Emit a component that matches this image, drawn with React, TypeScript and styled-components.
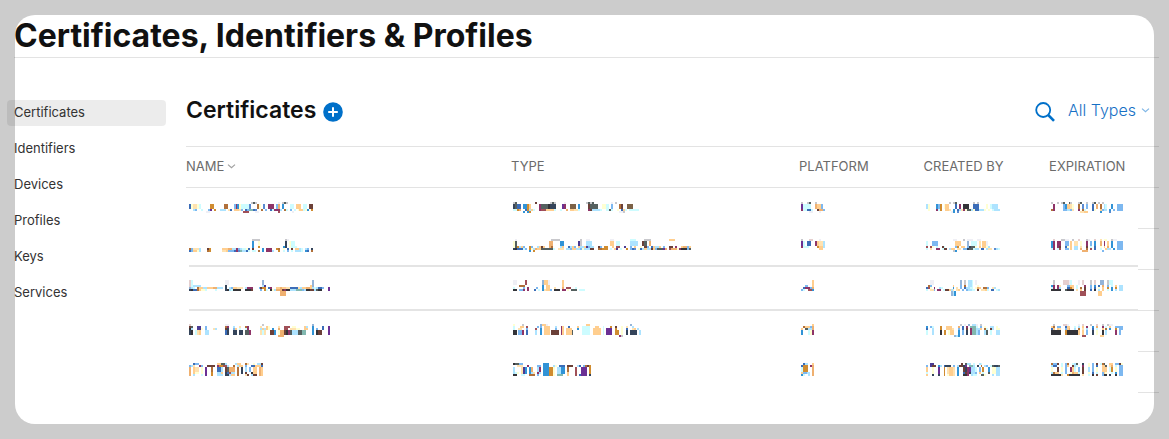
import React from "react";
import styled, { createGlobalStyle } from "styled-components";

const GlobalStyle = createGlobalStyle`
  *, *::before, *::after { box-sizing: border-box; }
  body {
    margin: 0;
    background: #fff;
    color: #111;
    font-family: Inter, "Liberation Sans", sans-serif;
  }
`;

const Page = styled.div`
  min-height: 100vh;
  padding: 15px 10px 46px 7px;
`;

/* Translucent frame that shades everything outside the rounded window. */
const Frame = styled.div`
  position: fixed;
  inset: 15px;
  border-radius: 20px;
  box-shadow: 0 0 0 40px rgba(0, 0, 0, 0.2);
  pointer-events: none;
`;

const Header = styled.header`
  margin-left: 7px;
  border-bottom: 1px solid #e3e3e3;
`;

const PageTitle = styled.h1`
  margin: 0;
  font-size: 32px;
  line-height: 42px;
  font-weight: 700;
`;

const Columns = styled.div`
  display: flex;
  gap: 20px;
  padding-top: 42px;
`;

const Sidebar = styled.nav`
  display: flex;
  flex-direction: column;
  flex: 0 0 159px;
  gap: 10px;
`;

const SideLink = styled.a<{ $active?: boolean }>`
  padding: 0 7px 2px;
  border-radius: 4px;
  background: ${(p) => (p.$active ? "rgba(0, 0, 0, 0.075)" : "transparent")};
  color: #333;
  font-size: 13px;
  line-height: 24px;
  text-decoration: none;
`;

const Main = styled.main`
  flex: 1;
  min-width: 0;
`;

const Toolbar = styled.div`
  display: flex;
  align-items: center;
  height: 46px;
  padding: 0 9px 26px 0;
`;

const SectionTitle = styled.h2`
  margin: 0;
  font-size: 23px;
  line-height: 22px;
  font-weight: 600;
`;

const IconButton = styled.button`
  display: flex;
  padding: 0;
  border: 0;
  background: none;
  color: #0070c9;
  cursor: pointer;
`;

const AddButton = styled(IconButton)`
  margin: 4px auto 0 7px;
`;

const SearchButton = styled(IconButton)`
  margin: 4px 13px 0 0;
`;

const Picker = styled.label`
  display: flex;
  align-items: center;
  gap: 5px;
  color: #1670c5;
`;

const PickerSelect = styled.select`
  appearance: none;
  field-sizing: content;
  padding: 0;
  border: 0;
  background: none;
  color: inherit;
  font-family: inherit;
  font-size: 16px;
  font-weight: 300;
  line-height: 20px;
`;

const Table = styled.table`
  width: 100%;
  border-collapse: separate;
  border-spacing: 0;
  table-layout: fixed;
`;

const HeadCell = styled.th`
  height: 42px;
  padding: 0 0 2px;
  border: solid #e3e3e3;
  border-width: 1px 0;
  color: #6b6b6b;
  font-size: 13px;
  font-weight: 400;
  line-height: 16px;
  text-align: left;
`;

const SortButton = styled.button`
  display: flex;
  align-items: center;
  gap: 3px;
  padding: 0;
  border: 0;
  background: none;
  color: inherit;
  font: inherit;
`;

const Row = styled.tr<{ $height: number; $top: number; $ruled?: boolean }>`
  height: ${(p) => p.$height}px;
  & > td {
    padding: ${(p) => p.$top}px 0 0 2px;
    border-bottom: ${(p) => (p.$ruled ? "2px solid #e4e4e4" : "0")};
    vertical-align: top;
  }
  & > td:first-child {
    padding-left: 3px;
    border-bottom: 0;
    background: ${(p) =>
      p.$ruled ? "linear-gradient(#e4e4e4, #e4e4e4) 3px 100% / 100% 2px no-repeat" : "none"};
  }
  & > td[rowspan] {
    padding: 0;
    border: 0;
  }
`;

const Tick = styled.div`
  height: 41px;
  border-bottom: 1px solid #e3e3e3;
`;

const Mosaic = styled.svg`
  display: block;
`;

const palette: Record<string, string> = {
  a: "#ade3ff", b: "#7db8f0", c: "#cdfcff", d: "#333338", e: "#efeff5",
  f: "#ffe2b0", g: "#55605f", h: "#7c6247", i: "#4b3b93", j: "#3b6db8",
  k: "#34445a", l: "#ffffd2", m: "#8e3468", n: "#b0703a", o: "#ffce8f",
  p: "#6b3094", q: "#efb070", r: "#a05058", s: "#3193d6", t: "#d08c30",
  u: "#5b8bd0", v: "#c8c8cc", w: "#e5cfcf", x: "#6b4038", y: "#82b8b0",
  z: "#94b4d8",
};

/* Obscured cell text: bands of narrow colour cells spread over the text's width. */
function Obscured({ width, heights, bands }: { width: number; heights: number[]; bands: string[] }) {
  const columns = Math.max(...bands.map((b) => b.length));
  const total = heights.reduce((a, b) => a + b, 0);
  const edge = (x: number) => Math.round((x * width) / columns);
  let y = 0;
  return (
    <Mosaic width={width} height={total} shapeRendering="crispEdges" aria-hidden="true">
      {bands.map((band, i) => {
        const top = y;
        y += heights[i];
        return [...band].map((ch, x) =>
          palette[ch] ? (
            <rect
              key={`${i}-${x}`}
              x={edge(x)}
              y={top}
              width={edge(x + 1) - edge(x)}
              height={heights[i]}
              fill={palette[ch]}
            />
          ) : null
        );
      })}
    </Mosaic>
  );
}

type RowData = {
  height: number;
  top: number;
  ruled?: boolean;
  heights: number[];
  widths: number[];
  cells: string[][];
};

const rows: RowData[] = [
  {
    height: 41,
    top: 14,
    heights: [2, 5, 2, 2],
    widths: [124, 126, 24, 74, 72],
    cells: [
      [
        "                                vgv           e vgv   ",
        "jlfflc     tt     nn   bmslccccu   nl u  mmm bq s   cc ooo cc xx",
        "  ab  c   bp t  aaa fj ooofb jbyyju  n b  jcmmma nc b c loocls t",
        "         ee                 rrr   ee          r      e",
      ],
      [
        "vg         x      vgv    e          vgvg        e v",
        "kgjj ssto    mgggdkkk   pm  hhh s    xgggg  llc b   nx  hhh",
        "cctq  jtaoc  mrrooooc  c  q ooffc    mxaaaac  cgc  l joc ccccc",
        "     s st                                           eev",
      ],
      ["v  vg  v", "pcccc  qoob", "mccjjc  xqqb", "    ee   e"],
      [
        "            v vg        v v",
        "al   sbt loo   j m ddd  jjj    l caaa",
        " l   mct  oof s jafmlggaljjaaal l caaa",
        "             es u",
      ],
      [
        "v  v vg  gv   vg  v  vg v v",
        " m    bsoofl  n u b  j q n ac  s  bbb",
        "nm    bbaabf  m nc   jl  obaa s b bbb",
        "               ffoo      s    u",
      ],
    ],
  },
  {
    height: 38,
    top: 10,
    ruled: true,
    heights: [2, 5, 2, 2, 2],
    widths: [124, 178, 24, 74, 72],
    cells: [
      [
        "                                vvvv             ve",
        "                                s  l             k lcc",
        "                                s  t            sk lccc",
        "nbfffa   xt      oooqqaambacclj x    s mmm  tn  l j x ooac ab k",
        "jboola   nt      ffobbbjmuyaajc cc n s mmma  t  c b c aaac sj n",
      ],
      [
        " e                 vvvv          v  ee          ee        ccc    vvv         ooo",
        "lg                qq   ss       iv  aaa         oo cc     aaaa  xg q",
        "lgtaob  tb  aoxo  qn   ao  jaob oaaoibaa  xb tt  o rr  i  b o  l xb joaao b  xx m  oqqbo",
        "kdjjjcb tlaqooggggggc fff aabooaablaaaxx  nnttt c oi c  t bju ljaoaaxobgggpq rqqqlmdddbg",
        "        s t",
      ],
      ["v   ww   e", "pc jj  moffa", "mccc    tooa", "         oo", ""],
      [
        "              ee   v eee  ee",
        "c  bbb         ooo   z ccc f ooe",
        "r rl c  xc     bt oo bkggl o oola",
        "c f  mm cxx aoo ff bbkggcaa jj aff uac",
        "              vs",
      ],
      [
        " w   vvee  v  w   ve  w  f ll  vee",
        "sm mm  bb o ff l  m b s  q m o s  bbb",
        "sm mx  jl o aa f  x c j  l o q s  bbb",
        "cm cr  bb o aa q  n r j  c  oaa s bbb",
        "                qqq       b",
      ],
    ],
  },
  {
    height: 44,
    top: 13,
    ruled: true,
    heights: [5, 2, 2, 2, 5],
    widths: [141, 72, 13, 74, 72],
    cells: [
      [
        "wc                ee                 z                        z",
        "wcaaaa            k                  ai                      oz",
        "zac nooaaoooqqaaa k aboofff ammm   bxtt jm  ooqooffjjjjfaooqqoacajjb  p",
        "kdjjnollc    c    kdacdddd  dddx    b tc dlaqqqxmddaaayyybaddxxagdd   p",
        "                                              qqq",
      ],
      [
        "ee    r        zooe      o",
        "   nnn         s oo      o",
        "c    b m    b  s oo  f   q rrr  c",
        "dd bbm m   j c sfoob ddd mm l ggg ccc",
      ],
      ["      o", "  bb  o", " jmmmbq", "bc  rrs", ""],
      [
        "  ee              z v aac e",
        " nb           o   b n aac  l",
        "jrl m  ac     s f b jaacc lqo nnb  fa",
        "c ffb mm cxxoaf fo b baacc x ffoc jj ca",
        "             zas",
      ],
      [
        " v    wwwec   e w   v w  zz  vcc",
        "sm mf   bboo c   m  b s j q  b c o aa",
        "cm ma   jjto c n x  b j l o  t s t aa",
        "ddddd  gdddd f o x  j d a o  c s a aa",
        "               rrr      oo",
      ],
    ],
  },
  {
    height: 41,
    top: 13,
    heights: [2, 2, 2, 5, 2],
    widths: [141, 128, 13, 74, 72],
    cells: [
      [
        "w                 ee                 v                        z",
        "xg  ii  b         nm  a  f  nm      f  ol    f  rrr ll    oa  s    j  p",
        "da  iil b   fa    xk  bo c  cm      aoaol s  q  rr fffll  oo  s b  j  p",
        "kd cfo  aa        jk  kk kk ggm     fcf  xxs lqqxdmgaaaggyy   s dxx   p",
        "                                             qqq",
      ],
      [
        "l    v         zooe                     oo                      z",
        "c   oo r     b b ooo   a  mo  j    o  cccc   oo  c   t  x  l  f  a",
        "c  ff  b    r  s ooo   b  mo ooo   s  cccc  oooo c ppp  t  l  j  fo a",
        "dd bbm j    a  s ooo xxxx mo ooog     cccc  oooo c ppp  tt l  k kkkk a",
        "                                                          mv",
      ],
      ["      o", " nooobq", "o ggaaq", "s   clm", ""],
      [
        "                 v e z aae v",
        "s bc   t  ooo   q j m yyyc b l  aa l",
        "j  a   t  ooof  b j x myyaao nc xa ll",
        "c  a   d t loo  s b k myyab  ag c  aa",
        "              zas",
      ],
      [
        " v    wwe     e w   v  w  v  vee",
        "on bb  joo  c a o m  s q  m c o  bbbb",
        "jo of  boq  a n f a  j c  o n s  t bb",
        "ddddd  tddddddo o b  k l  d a    m b",
        "                rr       oo",
      ],
    ],
  },
  {
    height: 41,
    top: 11,
    heights: [2, 2, 5, 2, 2],
    widths: [74, 78, 13, 74, 72],
    cells: [
      [
        "  jbb         oogga    aoo  nf  l aax",
        "baf  mb  xxxx mttrra  n aoo b  jjoooj",
        "q off l p  n  jja xgqqq n k a b oo qo",
        "q oll l p  t  aao kjraa n k x  doo qo",
        "q a   c p  t  aaa kkaoo n   fx axx qo",
      ],
      [
        "dggbb          sss",
        "  fff  m    bb sss  al jjj xxx  aj bnxt",
        "a   fis sq  am sssttl aass n   r  ppp t",
        "acl fis saf ma sssttl aass o   r  ppp t",
        "dd  cc  nnn b  sssttl yyy  o   r jppp k",
      ],
      [" jaa  o", "jttt mq", "cttt  q", "obbaa q", "sc  a q"],
      [
        "  ii              x gaa c  ac",
        "b ixx sa jkkk b axxkp yya k n ab cgkkg",
        "o  l  p  t foof s  xkmpaac b t  s llaa",
        "c  l  p  t foof s  jxmkaab o c  g llaa",
        "o  k  k  t loof s  ddm acc  ggl   a aa",
      ],
      [
        "nbbx c bn  cag  k  l b x cng  oo bbxl",
        "ajj  c bo  xac  m  l b j  oog fq c bb",
        "l  x l b  moc b x  a b l  ooo ct l bb",
        "anoo c b  lqooc x  l j c  bol  c s bb",
        "dddddf  tdddddd f  c d x  bdd k  d bb",
      ],
    ],
  },
];

const navItems = ["Certificates", "Identifiers", "Devices", "Profiles", "Keys", "Services"];

function Chevron({ color }: { color: string }) {
  return (
    <svg width="9" height="6" viewBox="0 0 9 6" fill="none" stroke={color} aria-hidden="true">
      <path d="M1 1.6 4.5 4.7 8 1.6" strokeWidth="1.2" />
    </svg>
  );
}

export default function App() {
  return (
    <>
      <GlobalStyle />
      <Page>
        <Header>
          <PageTitle>Certificates, Identifiers &amp; Profiles</PageTitle>
        </Header>
        <Columns>
          <Sidebar aria-label="Resources">
            {navItems.map((item, i) => (
              <SideLink key={item} href={`#${item.toLowerCase()}`} $active={i === 0}>
                {item}
              </SideLink>
            ))}
          </Sidebar>
          <Main>
            <Toolbar>
              <SectionTitle>Certificates</SectionTitle>
              <AddButton type="button" aria-label="Add certificate">
                <svg width="20" height="20" viewBox="0 0 20 20" aria-hidden="true">
                  <circle cx="10" cy="10" r="9.8" fill="currentColor" />
                  <path d="M10 5.2v9.6M5.2 10h9.6" stroke="#fff" strokeWidth="2" />
                </svg>
              </AddButton>
              <SearchButton type="button" aria-label="Search">
                <svg width="20" height="20" viewBox="0 0 20 20" fill="none" stroke="currentColor" aria-hidden="true">
                  <circle cx="8.2" cy="8" r="7" strokeWidth="1.8" />
                  <path d="M13.2 13 19 18.8" strokeWidth="2.6" />
                </svg>
              </SearchButton>
              <Picker>
                <PickerSelect aria-label="Certificate type" defaultValue="all">
                  <option value="all">All Types</option>
                </PickerSelect>
                <Chevron color="#7fb6e6" />
              </Picker>
            </Toolbar>
            <Table>
              <colgroup>
                <col />
                <col style={{ width: "29.6%" }} />
                <col style={{ width: "12.8%" }} />
                <col style={{ width: "12.9%" }} />
                <col style={{ width: "9.1%" }} />
                <col style={{ width: "2.2%" }} />
              </colgroup>
              <thead>
                <tr>
                  <HeadCell scope="col">
                    <SortButton type="button">
                      NAME <Chevron color="#a0a0a0" />
                    </SortButton>
                  </HeadCell>
                  <HeadCell scope="col">TYPE</HeadCell>
                  <HeadCell scope="col">PLATFORM</HeadCell>
                  <HeadCell scope="col">CREATED BY</HeadCell>
                  <HeadCell scope="col">EXPIRATION</HeadCell>
                  <HeadCell as="td" />
                </tr>
              </thead>
              <tbody>
                {rows.map((row, i) => (
                  <Row key={i} $height={row.height} $top={row.top} $ruled={row.ruled}>
                    {row.cells.map((bands, j) => (
                      <td key={j}>
                        <Obscured width={row.widths[j]} heights={row.heights} bands={bands} />
                      </td>
                    ))}
                    {i === 0 && (
                      <td rowSpan={rows.length}>
                        {rows.map((_, k) => (
                          <Tick key={k} />
                        ))}
                      </td>
                    )}
                  </Row>
                ))}
              </tbody>
            </Table>
          </Main>
        </Columns>
      </Page>
      <Frame />
    </>
  );
}
